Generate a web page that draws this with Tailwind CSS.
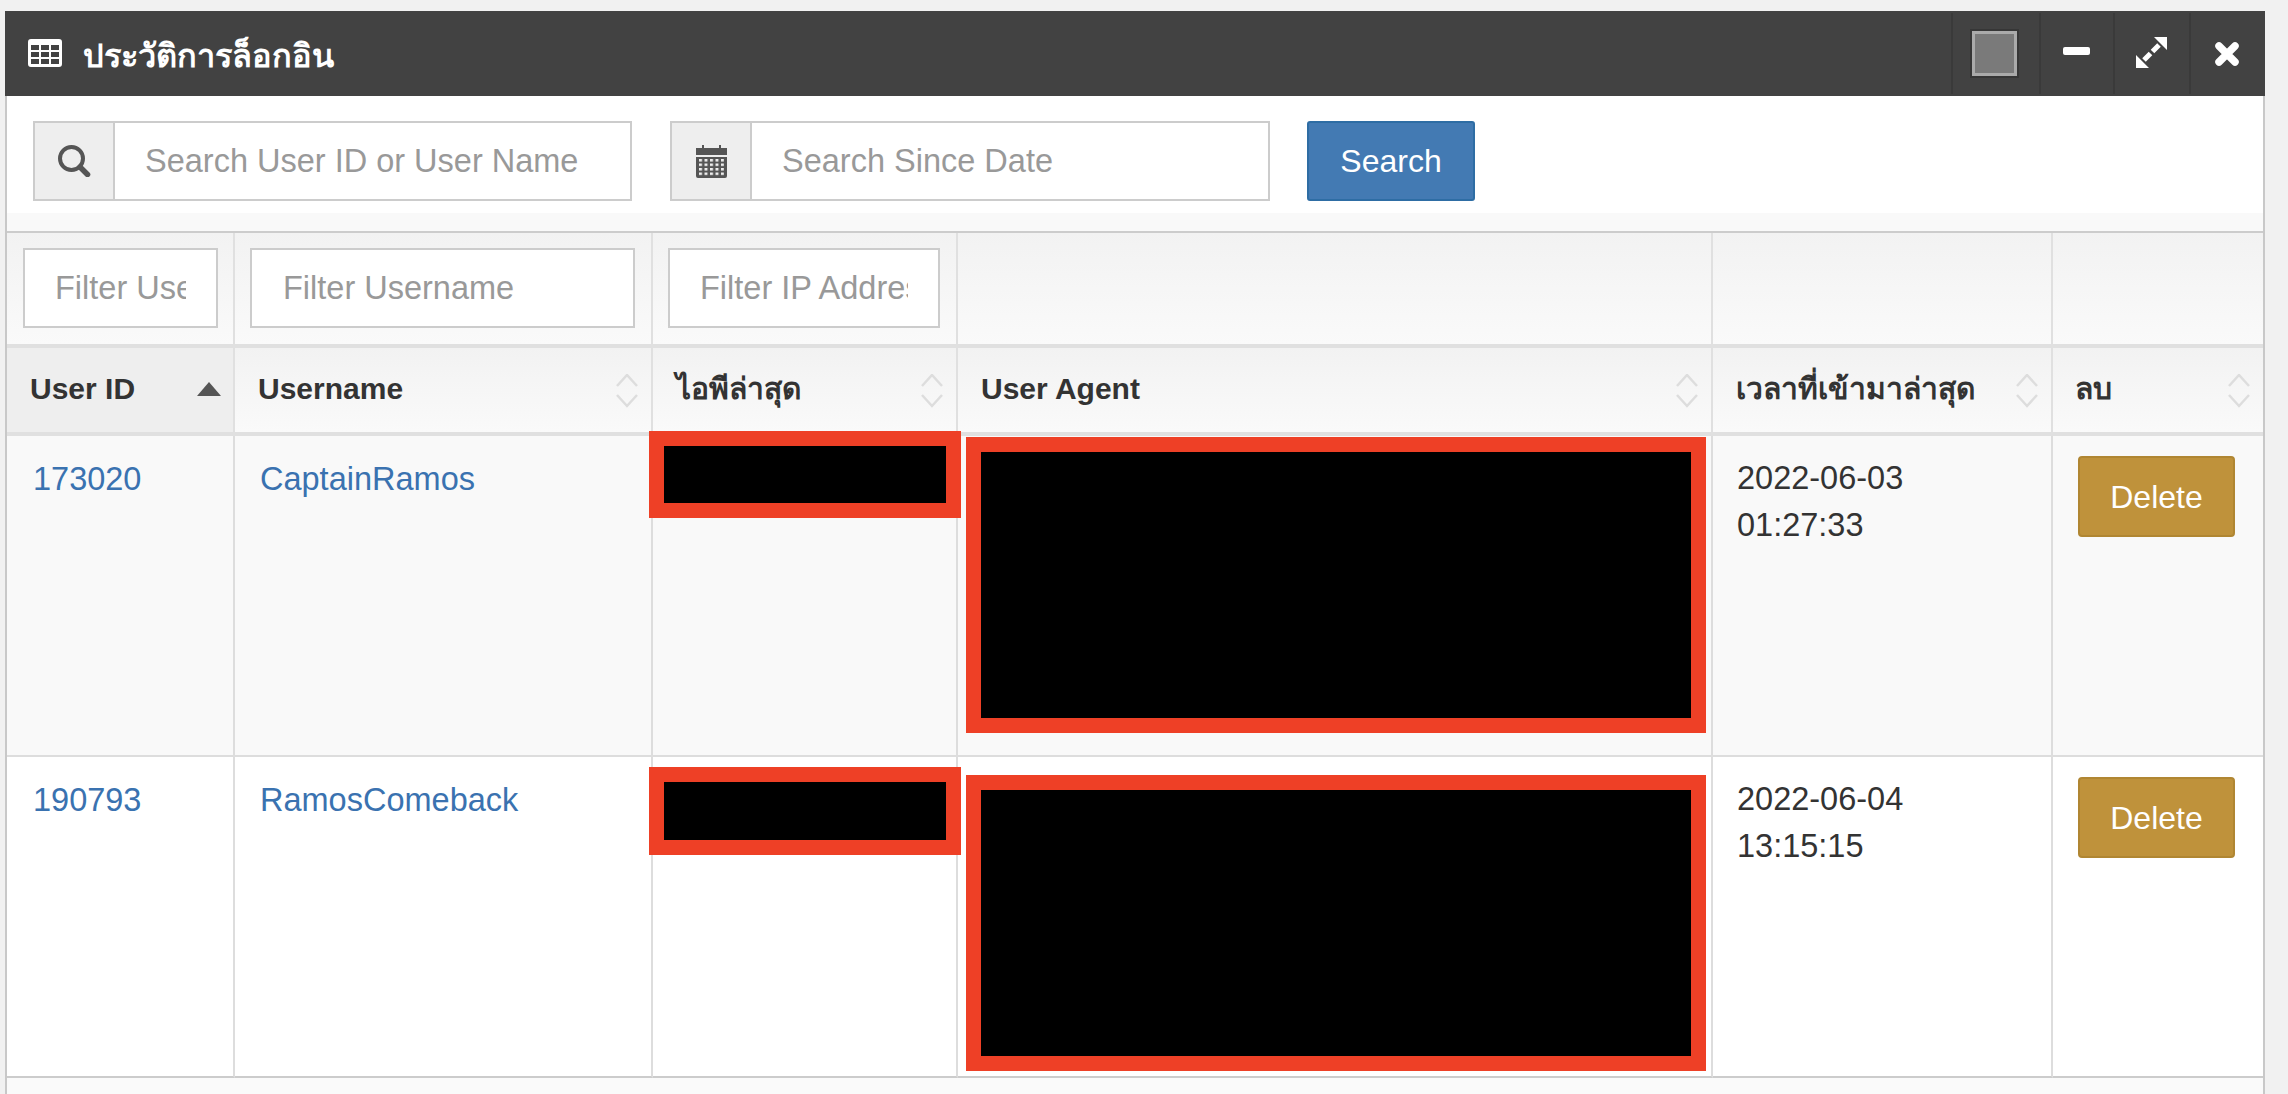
<!DOCTYPE html>
<html lang="th">
<head>
    <meta charset="UTF-8">
    <title>ประวัติการล็อกอิน</title>
    <script src="https://cdn.jsdelivr.net/npm/@tailwindcss/browser@4"></script>
</head>
<body class="h-[1094px] overflow-hidden bg-[#f1f1f1] pt-[11px] pl-[5px] font-['Liberation_Sans',sans-serif] text-[32.5px] text-[#333]">
    <div class="w-[2260px] h-[1083px] flex flex-col bg-white">
        <!-- Title bar -->
        <header class="h-[85px] shrink-0 flex items-stretch bg-[#424242] text-white">
            <div class="flex-1 flex items-center pl-[23px] gap-[21px]">
                <svg class="w-[34px] h-[28px] mb-[2px]" viewBox="0 0 34 28" fill="#fff">
                    <path fill-rule="evenodd" d="M3 0h28a3 3 0 0 1 3 3v22a3 3 0 0 1-3 3H3a3 3 0 0 1-3-3V3a3 3 0 0 1 3-3zM3 6v5h8V6zm10 0v5h8V6zm10 0v5h8V6zM3 13v5h8v-5zm10 0v5h8v-5zm10 0v5h8v-5zM3 20v5h8v-5zm10 0v5h8v-5zm10 0v5h8v-5z"/>
                </svg>
                <span class="font-bold text-[32.500px] leading-none mt-[5px]">ประวัติการล็อกอิน</span>
            </div>
            <div class="w-[88px] my-[2px] border-l-2 border-[#3a3a3a] flex items-center justify-center pr-[3px]">
                <div class="w-[49px] h-[49px] border-2 border-[#363636]">
                    <div class="w-full h-full border-[3px] border-[#aaa] bg-[#7a7a7a]"></div>
                </div>
            </div>
            <div class="w-[74px] my-[2px] border-l-2 border-[#3a3a3a] flex items-center justify-center">
                <div class="w-[27px] h-[8px] rounded-[2px] bg-white mb-[5px] mr-[2px]"></div>
            </div>
            <div class="w-[76px] my-[2px] border-l-2 border-[#3a3a3a] flex items-center justify-center">
                <svg class="w-[31px] h-[31px] mb-[2px] mr-[2px]" viewBox="0 0 31 31" fill="#fff" stroke="#fff">
                    <path stroke="none" d="M18 0h13v13zM0 18v13h13z"/>
                    <path fill="none" stroke-width="5" d="M23 8l-6.500 6.500M8 23l6.500-6.500"/>
                </svg>
            </div>
            <div class="w-[76px] my-[2px] border-l-2 border-[#3a3a3a] flex items-center justify-center">
                <svg class="w-[24px] h-[24px] mr-[2px]" viewBox="0 0 24 24" fill="none" stroke="#fff" stroke-width="7.500" stroke-linecap="round">
                    <path d="M4 4l16 16M20 4L4 20"/>
                </svg>
            </div>
        </header>

        <div class="flex-1 flex flex-col border-x-2 border-[#c8c8c8] min-h-0">
            <!-- Search -->
            <form class="h-[117px] shrink-0 flex items-start pt-[25px] pl-[26px]">
                <div class="flex w-[599px] h-[80px] border-2 border-[#ccc]">
                    <span class="w-[80px] shrink-0 flex items-center justify-center bg-[#eee] border-r-2 border-[#ccc]">
                        <svg class="w-[33px] h-[32px]" viewBox="0 0 33 32" fill="none" stroke="#555">
                            <circle cx="13.500" cy="13.500" r="11.500" stroke-width="4"/>
                            <path stroke-width="5.500" stroke-linecap="round" d="M22 22l7.500 7.500"/>
                        </svg>
                    </span>
                    <input type="text" placeholder="Search User ID or User Name" class="min-w-0 flex-1 px-[30px] outline-none placeholder:text-[#999]">
                </div>
                <div class="flex w-[600px] h-[80px] border-2 border-[#ccc] ml-[38px]">
                    <span class="w-[80px] shrink-0 flex items-center justify-center bg-[#eee] border-r-2 border-[#ccc]">
                        <svg class="w-[31px] h-[33px]" viewBox="0 0 31 33">
                            <defs>
                                <pattern id="days" x="3" y="14" width="5.500" height="4.500" patternUnits="userSpaceOnUse">
                                    <rect width="3" height="2.500" fill="#eee"/>
                                </pattern>
                            </defs>
                            <path fill="#555" d="M6 0h2v3h15V0h2v3h6v7H0V3h6zM0 12h31v19a2 2 0 0 1-2 2H2a2 2 0 0 1-2-2z"/>
                            <rect x="3" y="14" width="25" height="17" fill="url(#days)"/>
                        </svg>
                    </span>
                    <input type="text" placeholder="Search Since Date" class="min-w-0 flex-1 px-[30px] outline-none placeholder:text-[#999]">
                </div>
                <button type="button" class="w-[168px] h-[80px] ml-[37px] rounded-[3px] border-2 border-[#2e6da4] bg-[#437ab3] text-[32px] text-white">Search</button>
            </form>
            <div class="h-[18px] shrink-0 bg-[#f9f9f9]"></div>

            <!-- Table -->
            <table class="w-[2256px] table-fixed border-separate border-spacing-0 border-t-2 border-[#ccc]">
                <colgroup>
                    <col class="w-[228px]"><col class="w-[418px]"><col class="w-[305px]"><col class="w-[755px]"><col class="w-[340px]"><col class="w-[210px]">
                </colgroup>
                <thead>
                    <tr class="h-[115px]">
                        <td class="px-[16px] border-r-2 border-b-4 border-[#e0e0e0] bg-linear-to-b from-[#f2f2f2] to-[#fafafa]">
                            <input type="text" placeholder="Filter User ID" class="w-[195px] h-[80px] px-[30px] mb-[1px] block border-2 border-[#ccc] bg-white outline-none placeholder:text-[#999]">
                        </td>
                        <td class="px-[15px] border-r-2 border-b-4 border-[#e0e0e0] bg-linear-to-b from-[#f2f2f2] to-[#fafafa]">
                            <input type="text" placeholder="Filter Username" class="w-[385px] h-[80px] px-[31px] mb-[1px] block border-2 border-[#ccc] bg-white outline-none placeholder:text-[#999]">
                        </td>
                        <td class="px-[15px] border-r-2 border-b-4 border-[#e0e0e0] bg-linear-to-b from-[#f2f2f2] to-[#fafafa]">
                            <input type="text" placeholder="Filter IP Address" class="w-[272px] h-[80px] px-[30px] mb-[1px] block border-2 border-[#ccc] bg-white outline-none placeholder:text-[#999]">
                        </td>
                        <td class="border-r-2 border-b-4 border-[#e0e0e0] bg-linear-to-b from-[#f2f2f2] to-[#fafafa]"></td>
                        <td class="border-r-2 border-b-4 border-[#e0e0e0] bg-linear-to-b from-[#f2f2f2] to-[#fafafa]"></td>
                        <td class="border-b-4 border-[#e0e0e0] bg-linear-to-b from-[#f2f2f2] to-[#fafafa]"></td>
                    </tr>
                    <tr class="h-[88px] text-left text-[30px]">
                        <th class="relative pl-[23px] pb-[4px] border-r-2 border-b-4 border-[#e0e0e0] bg-[#eee]">
                            User ID
                            <svg class="absolute right-[12px] top-[34px] w-[24px] h-[14px]" viewBox="0 0 24 14" fill="#555"><path d="M12 0l12 14H0z"/></svg>
                        </th>
                        <th class="relative pl-[23px] pb-[4px] border-r-2 border-b-4 border-[#e0e0e0] bg-linear-to-b from-[#f2f2f2] to-[#fafafa]">
                            Username
                            <svg class="absolute right-[12px] top-[26px] w-[24px] h-[34px]" viewBox="0 0 24 34" fill="none" stroke="#ddd" stroke-width="2.500"><path d="M2 12L12 1l10 11M2 21l10 11 10-11"/></svg>
                        </th>
                        <th class="relative pl-[23px] pb-[4px] border-r-2 border-b-4 border-[#e0e0e0] bg-linear-to-b from-[#f2f2f2] to-[#fafafa]">
                            ไอพีล่าสุด
                            <svg class="absolute right-[12px] top-[26px] w-[24px] h-[34px]" viewBox="0 0 24 34" fill="none" stroke="#ddd" stroke-width="2.500"><path d="M2 12L12 1l10 11M2 21l10 11 10-11"/></svg>
                        </th>
                        <th class="relative pl-[23px] pb-[4px] border-r-2 border-b-4 border-[#e0e0e0] bg-linear-to-b from-[#f2f2f2] to-[#fafafa]">
                            User Agent
                            <svg class="absolute right-[12px] top-[26px] w-[24px] h-[34px]" viewBox="0 0 24 34" fill="none" stroke="#ddd" stroke-width="2.500"><path d="M2 12L12 1l10 11M2 21l10 11 10-11"/></svg>
                        </th>
                        <th class="relative pl-[23px] pb-[4px] border-r-2 border-b-4 border-[#e0e0e0] bg-linear-to-b from-[#f2f2f2] to-[#fafafa]">
                            เวลาที่เข้ามาล่าสุด
                            <svg class="absolute right-[12px] top-[26px] w-[24px] h-[34px]" viewBox="0 0 24 34" fill="none" stroke="#ddd" stroke-width="2.500"><path d="M2 12L12 1l10 11M2 21l10 11 10-11"/></svg>
                        </th>
                        <th class="relative pl-[22px] pb-[4px] border-b-4 border-[#e0e0e0] bg-linear-to-b from-[#f2f2f2] to-[#fafafa]">
                            ลบ
                            <svg class="absolute right-[12px] top-[26px] w-[24px] h-[34px]" viewBox="0 0 24 34" fill="none" stroke="#ddd" stroke-width="2.500"><path d="M2 12L12 1l10 11M2 21l10 11 10-11"/></svg>
                        </th>
                    </tr>
                </thead>
                <tbody class="leading-[46px]">
                    <tr class="h-[321px] bg-[#f9f9f9]">
                        <td class="align-top pt-[20px] pl-[26px] border-r-2 border-b-2 border-[#ddd]"><a href="#" class="text-[#3a72b0]">173020</a></td>
                        <td class="align-top pt-[20px] pl-[25px] border-r-2 border-b-2 border-[#ddd]"><a href="#" class="text-[#3a72b0]">CaptainRamos</a></td>
                        <td class="relative border-r-2 border-b-2 border-[#ddd]">
                            <div class="absolute left-[-4px] top-[-5px] w-[312px] h-[87px] border-[15px] border-[#ee4026] bg-black"></div>
                        </td>
                        <td class="relative border-r-2 border-b-2 border-[#ddd]">
                            <div class="absolute left-[8px] top-[1px] w-[740px] h-[296px] border-[15px] border-[#ee4026] bg-black"></div>
                        </td>
                        <td class="align-top pt-[19px] pl-[24px] leading-[47px] border-r-2 border-b-2 border-[#ddd]">2022-06-03<br>01:27:33</td>
                        <td class="align-top pt-[20px] pl-[25px] border-b-2 border-[#ddd]">
                            <button type="button" class="block w-[157px] h-[81px] rounded-[4px] border-2 border-[#b08632] bg-[#bf923b] text-[32px] text-white">Delete</button>
                        </td>
                    </tr>
                    <tr class="h-[321px] bg-white">
                        <td class="align-top pt-[20px] pl-[26px] border-r-2 border-b-2 border-b-[#ccc] border-r-[#ddd]"><a href="#" class="text-[#3a72b0]">190793</a></td>
                        <td class="align-top pt-[20px] pl-[25px] border-r-2 border-b-2 border-b-[#ccc] border-r-[#ddd]"><a href="#" class="text-[#3a72b0]">RamosComeback</a></td>
                        <td class="relative border-r-2 border-b-2 border-b-[#ccc] border-r-[#ddd]">
                            <div class="absolute left-[-4px] top-[10px] w-[312px] h-[88px] border-[15px] border-[#ee4026] bg-black"></div>
                        </td>
                        <td class="relative border-r-2 border-b-2 border-b-[#ccc] border-r-[#ddd]">
                            <div class="absolute left-[8px] top-[18px] w-[740px] h-[296px] border-[15px] border-[#ee4026] bg-black"></div>
                        </td>
                        <td class="align-top pt-[19px] pl-[24px] leading-[47px] border-r-2 border-b-2 border-b-[#ccc] border-r-[#ddd]">2022-06-04<br>13:15:15</td>
                        <td class="align-top pt-[20px] pl-[25px] border-b-2 border-[#ccc]">
                            <button type="button" class="block w-[157px] h-[81px] rounded-[4px] border-2 border-[#b08632] bg-[#bf923b] text-[32px] text-white">Delete</button>
                        </td>
                    </tr>
                </tbody>
            </table>
            <div class="flex-1 bg-[#fafafa]"></div>
        </div>
    </div>
</body>
</html>
